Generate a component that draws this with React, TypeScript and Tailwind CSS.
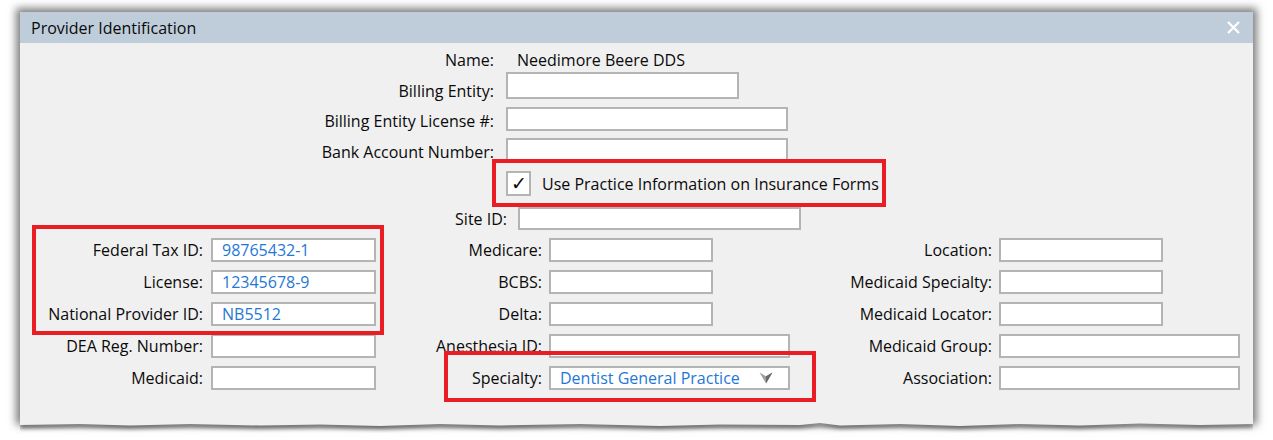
import React from 'react';

/**
 * ProviderIdentification — read-only recreation of the "Provider
 * Identification" dialog with the red callout boxes on top.
 */

const FONT = { fontFamily: '"Open Sans", "Noto Sans", Arial, sans-serif' };

function Box({ w, h = 24, value }: { w: number; h?: number; value?: string }) {
  return (
    <div
      className="flex shrink-0 items-center border-2 border-[#b4b4b4] bg-white pl-[9px] text-[#1f78d6]"
      style={{ width: w, height: h }}
    >
      {value}
    </div>
  );
}

function Field({
  label,
  labelW,
  gap = 7,
  inputW,
  value,
}: {
  label: string;
  labelW: number;
  gap?: number;
  inputW: number;
  value?: string;
}) {
  return (
    <div className="flex h-[24px] items-center" style={{ columnGap: gap }}>
      <div className="whitespace-nowrap text-right leading-[24px]" style={{ width: labelW }}>
        {label}
      </div>
      <Box w={inputW} value={value} />
    </div>
  );
}

function Chevron() {
  return (
    <svg width="14" height="12" viewBox="0 0 14 12">
      <path d="M0.5 0.5 L7 4.2 L13.5 0.5 L7 11.5 Z" fill="#a0a0a0" />
      <path d="M7 4.2 L13.5 0.5 L7 11.5 Z" fill="#6a6a6a" />
    </svg>
  );
}

const EDGE =
  'M0 0 H1233 V3 L1180 4 L1120 2.5 L1060 4.5 L1000 3 L940 5 L880 3 L820 4.5 L800 2 L780 4 L700 3.5 L640 5 L560 3 L480 4.5 L420 3 L360 5 L300 3.5 L240 4.5 L170 3 L110 4.5 L60 3 L0 4 Z';

function TornEdge() {
  return (
    <svg className="block" width="1233" height="12" viewBox="0 0 1233 12">
      <defs>
        <filter id="tornShadow" x="-5%" y="-50%" width="110%" height="250%">
          <feGaussianBlur stdDeviation="2" />
        </filter>
      </defs>
      <path d={EDGE} fill="rgba(0,0,0,0.6)" transform="translate(0 3)" filter="url(#tornShadow)" />
      <path d={EDGE} fill="#f0f0f0" />
    </svg>
  );
}

export default function App() {
  return (
    <div
      className="h-[440px] w-[1273px] overflow-hidden bg-white pl-[20px] pt-[12px] text-[16px] text-[#0a0a0a]"
      style={FONT}
    >
      <div className="w-[1233px]">
        <div className="shadow-[0_0_8px_4px_rgba(0,0,0,0.5)]">
          {/* Title bar */}
          <div className="flex h-[31px] items-center justify-between bg-[#bfcddb] pl-[11px] pr-[13px]">
            <span>Provider Identification</span>
            <svg width="13" height="13" viewBox="0 0 13 13">
              <path d="M1 1 L12 12 M12 1 L1 12" stroke="#fff" strokeWidth="2.2" />
            </svg>
          </div>

          {/* Body */}
          <div className="relative h-[378px] bg-[#f0f0f0]">
            {/* Top block */}
            <div className="flex flex-col pl-[280px] pt-[5px]">
              <div className="flex h-[24px] items-center gap-x-[12px]">
                <div className="w-[194px] text-right">Name:</div>
                <div className="pl-[11px]">Needimore Beere DDS</div>
              </div>
              <div className="flex h-[27px] items-start gap-x-[12px]">
                <div className="mt-[7px] w-[194px] text-right leading-[24px]">Billing Entity:</div>
                <Box w={233} h={27} />
              </div>
              <div className="mt-[8px] flex h-[24px] items-start gap-x-[12px]">
                <div className="mt-[2px] w-[194px] text-right leading-[24px]">Billing Entity License #:</div>
                <Box w={282} />
              </div>
              <div className="mt-[7px] flex h-[24px] items-start gap-x-[12px]">
                <div className="mt-[2px] w-[194px] text-right leading-[24px]">Bank Account Number:</div>
                <Box w={282} />
              </div>
              <div className="mt-[9px] flex h-[25px] items-center gap-x-[11px] pl-[206px]">
                <div className="flex h-[25px] w-[25px] items-center justify-center border-2 border-[#b4b4b4] bg-white text-[19px] leading-none">
                  ✓
                </div>
                <span>Use Practice Information on Insurance Forms</span>
              </div>
              <div className="mt-[11px] flex h-[23px] items-center gap-x-[11px]">
                <div className="w-[207px] text-right leading-[24px]">Site ID:</div>
                <Box w={283} h={23} />
              </div>
            </div>

            {/* Three columns */}
            <div className="mt-[8px] flex pl-[12px]">
              <div className="flex flex-col gap-y-[8px]">
                <Field label="Federal Tax ID:" labelW={171} gap={8} inputW={165} value="98765432-1" />
                <Field label="License:" labelW={171} gap={8} inputW={165} value="12345678-9" />
                <Field label="National Provider ID:" labelW={171} gap={8} inputW={165} value="NB5512" />
                <Field label="DEA Reg. Number:" labelW={171} gap={8} inputW={165} />
                <Field label="Medicaid:" labelW={171} gap={8} inputW={165} />
              </div>
              <div className="ml-[60px] flex flex-col gap-y-[8px]">
                <Field label="Medicare:" labelW={106} inputW={164} />
                <Field label="BCBS:" labelW={106} inputW={164} />
                <Field label="Delta:" labelW={106} inputW={164} />
                <Field label="Anesthesia ID:" labelW={106} inputW={241} />
                <div className="flex h-[24px] items-center gap-x-[7px]">
                  <div className="w-[106px] text-right">Specialty:</div>
                  <div className="flex h-[24px] w-[241px] items-center justify-between border-2 border-[#b4b4b4] bg-white pl-[9px] pr-[15px] text-[#1f78d6]">
                    <span>Dentist General Practice</span>
                    <Chevron />
                  </div>
                </div>
              </div>
              <div className="ml-[58px] flex flex-col gap-y-[8px]">
                <Field label="Location:" labelW={144} inputW={164} />
                <Field label="Medicaid Specialty:" labelW={144} inputW={164} />
                <Field label="Medicaid Locator:" labelW={144} inputW={164} />
                <Field label="Medicaid Group:" labelW={144} inputW={241} />
                <Field label="Association:" labelW={144} inputW={241} />
              </div>
            </div>

            {/* Red callouts */}
            <div className="pointer-events-none absolute left-[472px] top-[116px] h-[48px] w-[394px] border-4 border-[#ea1d25]" />
            <div className="pointer-events-none absolute left-[12px] top-[182px] h-[110px] w-[352px] border-4 border-[#ea1d25]" />
            <div className="pointer-events-none absolute left-[424px] top-[308px] h-[51px] w-[372px] border-4 border-[#ea1d25]" />
          </div>
        </div>
        <TornEdge />
      </div>
    </div>
  );
}
